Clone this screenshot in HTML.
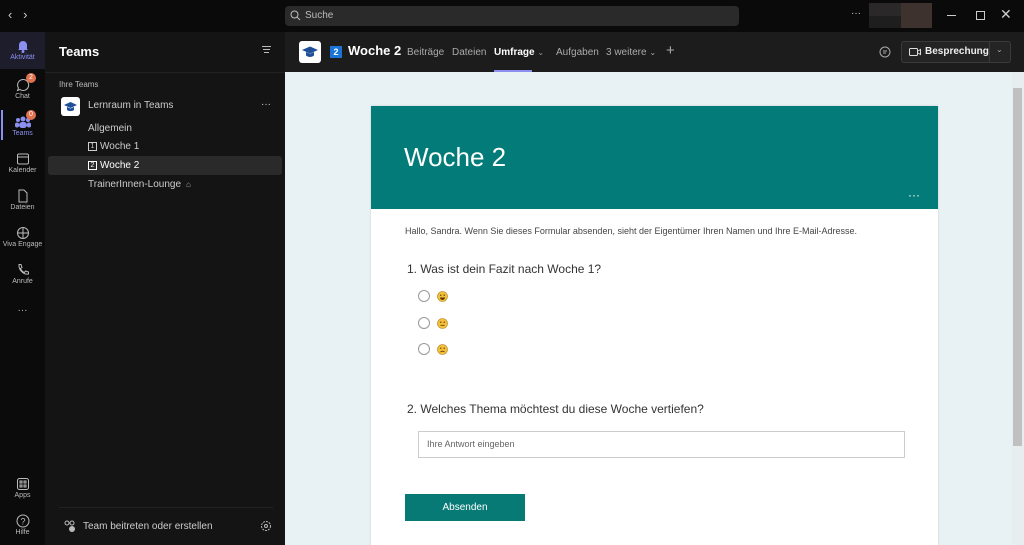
<!DOCTYPE html><html><head><style>
*{box-sizing:border-box;margin:0;padding:0}
body{width:1024px;height:545px;overflow:hidden;background:#0a0a0a;font-family:"Segoe UI","Liberation Sans",sans-serif;position:relative;color:#ddd}
.abs{position:absolute}
.rail{left:0;top:32px;width:45px;height:513px;background:#0b0b0b}
.ri{position:absolute;left:0;width:45px;text-align:center;font-size:7px;color:#bbb}
.ri svg{display:block;margin:0 auto 1px}
.panel{left:45px;top:32px;width:240px;height:513px;background:#141414}
.top{left:285px;top:32px;width:739px;height:40px;background:#1c1c1c}
.main{left:285px;top:72px;width:739px;height:473px;background:#e8f1f3}
.ch{position:absolute;left:88px;font-size:10px;color:#ccc}
.badge{position:absolute;width:10px;height:10px;border-radius:50%;background:#e0714f;color:#fff;font-size:7px;line-height:10px;text-align:center}
.num{display:inline-block;width:9px;height:9px;border:1px solid #ccc;font-size:7px;line-height:7px;text-align:center;margin-right:3px;vertical-align:1px}
.tab{position:absolute;top:47px;font-size:10px;color:#aaa}
</style></head><body>
<div class="abs" style="left:8px;top:7px;color:#ccc;font-size:13px">‹ &nbsp; ›</div>
<div class="abs" style="left:285px;top:6px;width:454px;height:20px;background:#2a2a2a;border-radius:4px;font-size:10px;color:#bbb;padding:4px 0 0 20px">Suche</div>
<svg class="abs" style="left:290px;top:10px" width="11" height="11"><circle cx="4.5" cy="4.5" r="3.5" stroke="#bbb" fill="none"/><path d="M7 7l3 3" stroke="#bbb"/></svg>
<div class="abs" style="left:851px;top:8px;font-size:10px;color:#ccc">···</div>
<div class="abs" style="left:869px;top:3px;width:32px;height:13px;background:#2a2828"></div>
<div class="abs" style="left:901px;top:3px;width:31px;height:25px;background:#3d322e"></div>
<div class="abs" style="left:869px;top:16px;width:32px;height:12px;background:#1e1e1e"></div>
<div class="abs" style="left:947px;top:15px;width:9px;height:1px;background:#ccc"></div>
<div class="abs" style="left:976px;top:11px;width:9px;height:9px;border:1px solid #ccc"></div>
<div class="abs" style="left:1000px;top:6px;color:#ccc;font-size:14px">✕</div>
<div class="abs rail"></div>
<div class="abs" style="left:0;top:32px;width:45px;height:37px;background:#1d1d2b"></div>
<div class="ri" style="top:39px;color:#8b8ff0"><svg width="14" height="14"><path d="M3 10V6a4 4 0 018 0v4l1 1H2z" fill="#8b8ff0"/><circle cx="7" cy="12.5" r="1.5" fill="#8b8ff0"/></svg>Aktivität</div>
<div class="ri" style="top:78px"><svg width="14" height="14"><path d="M7 1.5a5.5 5.5 0 11-3 10L1.5 12.5 2.5 10A5.5 5.5 0 017 1.5z" stroke="#bbb" fill="none"/></svg>Chat</div>
<div class="badge" style="left:26px;top:73px">2</div>
<div class="abs" style="left:1px;top:110px;width:2px;height:30px;background:#8b8ff0"></div>
<div class="ri" style="top:115px;color:#8b8ff0"><svg width="16" height="14"><circle cx="8" cy="4" r="2.5" fill="#8b8ff0"/><circle cx="3" cy="5" r="2" fill="#8b8ff0"/><circle cx="13" cy="5" r="2" fill="#8b8ff0"/><rect x="4" y="7" width="8" height="6" rx="3" fill="#8b8ff0"/><rect x="0" y="7.5" width="4" height="5" rx="2" fill="#8b8ff0"/><rect x="12" y="7.5" width="4" height="5" rx="2" fill="#8b8ff0"/></svg>Teams</div>
<div class="badge" style="left:26px;top:110px">0</div>
<div class="ri" style="top:152px"><svg width="14" height="14"><rect x="1.5" y="2" width="11" height="10" rx="1.5" stroke="#bbb" fill="none"/><path d="M1.5 5h11" stroke="#bbb"/></svg>Kalender</div>
<div class="ri" style="top:189px"><svg width="14" height="14"><path d="M3 1h5l3 3v9H3z" stroke="#bbb" fill="none"/></svg>Dateien</div>
<div class="ri" style="top:226px"><svg width="14" height="14"><circle cx="7" cy="7" r="5.5" stroke="#bbb" fill="none"/><path d="M1.5 7h11M7 1.5v11" stroke="#bbb"/></svg>Viva Engage</div>
<div class="ri" style="top:263px"><svg width="14" height="14"><path d="M3 1.5l2 0 1 3-1.5 1a7 7 0 004 4l1-1.5 3 1v2c-5 1-10-4-9.5-9.5z" stroke="#bbb" fill="none"/></svg>Anrufe</div>
<div class="ri" style="top:305px;font-size:10px">···</div>
<div class="ri" style="top:477px"><svg width="14" height="14"><rect x="1.5" y="1.5" width="11" height="11" rx="2" stroke="#bbb" fill="none"/><rect x="4" y="4" width="2" height="2" stroke="#bbb" fill="none"/><rect x="8" y="4" width="2" height="2" stroke="#bbb" fill="none"/><rect x="4" y="8" width="2" height="2" stroke="#bbb" fill="none"/><rect x="8" y="8" width="2" height="2" stroke="#bbb" fill="none"/></svg>Apps</div>
<div class="ri" style="top:514px"><svg width="14" height="14"><circle cx="7" cy="7" r="6" stroke="#bbb" fill="none"/><text x="7" y="10.5" font-size="9" fill="#bbb" text-anchor="middle">?</text></svg>Hilfe</div>
<div class="abs panel"></div>
<div class="abs" style="left:59px;top:44px;font-size:13px;font-weight:bold;color:#fff">Teams</div>
<div class="abs" style="left:262px;top:46px;width:9px;height:1px;background:#bbb"></div>
<div class="abs" style="left:263px;top:49px;width:7px;height:1px;background:#bbb"></div>
<div class="abs" style="left:264px;top:52px;width:5px;height:1px;background:#bbb"></div>
<div class="abs" style="left:45px;top:72px;width:240px;height:1px;background:#222"></div>
<div class="abs" style="left:59px;top:80px;font-size:8px;color:#bbb">Ihre Teams</div>
<div class="abs" style="left:61px;top:97px;width:19px;height:19px;background:#fff;border-radius:3px"><svg width="19" height="19"><path d="M3 8l6.5-3 6.5 3-6.5 3z" fill="#1f4f99"/><path d="M6 10v3c2 1.5 5 1.5 7 0v-3l-3.5 1.5z" fill="#1f4f99"/></svg></div>
<div class="abs" style="left:88px;top:100px;font-size:10px;color:#ccc">Lernraum in Teams</div>
<div class="abs" style="left:261px;top:99px;font-size:10px;color:#ccc">···</div>
<div class="ch" style="top:123px">Allgemein</div>
<div class="ch" style="top:141px"><span class="num">1</span>Woche 1</div>
<div class="abs" style="left:48px;top:156px;width:234px;height:19px;background:#2a2a2a;border-radius:3px"></div>
<div class="ch" style="top:160px;color:#fff"><span class="num" style="border-color:#fff">2</span>Woche 2</div>
<div class="ch" style="top:179px">TrainerInnen-Lounge <span style="font-size:8px;color:#aaa">&nbsp;⌂</span></div>
<div class="abs" style="left:59px;top:507px;width:214px;height:1px;background:#222"></div>
<svg class="abs" style="left:63px;top:520px" width="13" height="12"><circle cx="4" cy="3" r="2" stroke="#bbb" fill="none"/><circle cx="9" cy="3" r="2" stroke="#bbb" fill="none"/><circle cx="9" cy="9" r="3" fill="#bbb"/></svg>
<div class="abs" style="left:83px;top:521px;font-size:10px;color:#ccc">Team beitreten oder erstellen</div>
<svg class="abs" style="left:260px;top:520px" width="12" height="12"><circle cx="6" cy="6" r="4.5" stroke="#bbb" fill="none" stroke-dasharray="2 1"/><circle cx="6" cy="6" r="1.5" stroke="#bbb" fill="none"/></svg>
<div class="abs top"></div>
<div class="abs" style="left:299px;top:41px;width:22px;height:22px;background:#fff;border-radius:3px"><svg width="22" height="22"><path d="M3 9l8-3.5 8 3.5-8 3.5z" fill="#1f4f99"/><path d="M7 11v3.5c2.5 2 5.5 2 8 0V11l-4 1.7z" fill="#1f4f99"/></svg></div>
<div class="abs" style="left:330px;top:46px;width:12px;height:12px;background:#1a74d8;color:#fff;font-size:9px;text-align:center;line-height:12px;font-weight:bold">2</div>
<div class="abs" style="left:348px;top:43px;font-size:13px;font-weight:bold;color:#fff">Woche 2</div>
<div class="tab" style="left:407px">Beiträge</div>
<div class="tab" style="left:452px">Dateien</div>
<div class="tab" style="left:494px;color:#fff;font-weight:bold">Umfrage <span style="font-weight:normal;font-size:8px;color:#999">⌄</span></div>
<div class="abs" style="left:494px;top:70px;width:38px;height:2px;background:#8b8ff0"></div>
<div class="tab" style="left:556px">Aufgaben</div>
<div class="tab" style="left:606px">3 weitere <span style="font-size:8px">⌄</span></div>
<div class="abs" style="left:666px;top:42px;font-size:15px;color:#aaa">+</div>
<svg class="abs" style="left:879px;top:46px" width="12" height="12"><circle cx="6" cy="6" r="5" stroke="#aaa" fill="none"/><path d="M4 5h4M4 7h3" stroke="#aaa"/></svg>
<div class="abs" style="left:901px;top:41px;width:110px;height:22px;border:1px solid #3a3a3a;border-radius:3px;background:#242424"></div>
<div class="abs" style="left:989px;top:41px;width:1px;height:22px;background:#3a3a3a"></div>
<svg class="abs" style="left:909px;top:47px" width="12" height="10"><rect x="0.5" y="1.5" width="8" height="7" rx="1" stroke="#ddd" fill="none"/><path d="M9 4l2.5-1.5v5L9 6" stroke="#ddd" fill="none"/></svg>
<div class="abs" style="left:925px;top:46px;font-size:10px;font-weight:bold;color:#eee;line-height:12px">Besprechung</div>
<div class="abs" style="left:996px;top:45px;font-size:8px;color:#aaa">⌄</div>
<div class="abs main"></div>
<div class="abs" style="left:1012px;top:72px;width:12px;height:473px;background:#e8eef0"></div>
<div class="abs" style="left:1013px;top:88px;width:9px;height:358px;background:#c0c0c0"></div>
<div class="abs" style="left:371px;top:106px;width:567px;height:439px;background:#fff;box-shadow:0 0 2px #ccc"></div>
<div class="abs" style="left:371px;top:106px;width:567px;height:103px;background:#037c79"></div>
<div class="abs" style="left:404px;top:142px;font-size:26px;color:#fff;font-family:'Liberation Sans',sans-serif">Woche 2</div>
<div class="abs" style="left:908px;top:188px;font-size:12px;color:#fff">···</div>
<div class="abs" style="left:405px;top:226px;font-size:9px;color:#444">Hallo, Sandra. Wenn Sie dieses Formular absenden, sieht der Eigentümer Ihren Namen und Ihre E-Mail-Adresse.</div>
<div class="abs" style="left:407px;top:262px;font-size:12px;color:#333">1. Was ist dein Fazit nach Woche 1?</div>
<div class="abs" style="left:418px;top:290px;width:12px;height:12px;border:1px solid #999;border-radius:50%"></div>
<div class="abs" style="left:418px;top:317px;width:12px;height:12px;border:1px solid #999;border-radius:50%"></div>
<div class="abs" style="left:418px;top:343px;width:12px;height:12px;border:1px solid #999;border-radius:50%"></div>
<svg class="abs" style="left:437px;top:291px" width="11" height="11"><circle cx="5.5" cy="5.5" r="5" fill="#f2c03a" stroke="#b07b10" stroke-width=".6"/><circle cx="3.8" cy="4.2" r=".7" fill="#5a3a00"/><circle cx="7.2" cy="4.2" r=".7" fill="#5a3a00"/><path d="M3 6.5h5a2.5 2.5 0 01-5 0z" fill="#5a3a00"/></svg>
<svg class="abs" style="left:437px;top:318px" width="11" height="11"><circle cx="5.5" cy="5.5" r="5" fill="#f2c03a" stroke="#b07b10" stroke-width=".6"/><circle cx="3.8" cy="4.2" r=".7" fill="#5a3a00"/><circle cx="7.2" cy="4.2" r=".7" fill="#5a3a00"/><path d="M3.5 7.3h4" stroke="#5a3a00" stroke-width=".8"/></svg>
<svg class="abs" style="left:437px;top:344px" width="11" height="11"><circle cx="5.5" cy="5.5" r="5" fill="#f2c03a" stroke="#b07b10" stroke-width=".6"/><circle cx="3.8" cy="4.2" r=".7" fill="#5a3a00"/><circle cx="7.2" cy="4.2" r=".7" fill="#5a3a00"/><path d="M3.5 8a2.5 2 0 014 0" stroke="#5a3a00" stroke-width=".8" fill="none"/></svg>
<div class="abs" style="left:407px;top:402px;font-size:12px;color:#333">2. Welches Thema möchtest du diese Woche vertiefen?</div>
<div class="abs" style="left:418px;top:431px;width:487px;height:27px;border:1px solid #ccc;font-size:9px;color:#666;padding:7px 0 0 8px">Ihre Antwort eingeben</div>
<div class="abs" style="left:405px;top:494px;width:120px;height:27px;background:#077a76;color:#fff;font-size:10px;text-align:center;line-height:27px">Absenden</div>
</body></html>
